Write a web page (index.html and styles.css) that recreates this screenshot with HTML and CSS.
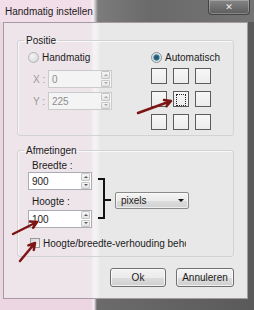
FILE: index.html
```html
<!DOCTYPE html>
<html lang="nl">
<head>
    <meta charset="UTF-8">
    <title>Handmatig instellen</title>
    <link rel="stylesheet" href="styles.css">
</head>
<body>
    <div class="window">
        <div class="titlebar">
            <span class="title">Handmatig instellen</span>
            <button class="close" aria-label="Sluiten">&#x2715;</button>
        </div>

        <div class="client">
            <fieldset class="group group-pos">
                <legend>Positie</legend>
                <div class="pos-cols">
                    <div class="pos-left">
                        <label class="radio disabled"><span class="dot"></span>Handmatig</label>
                        <div class="coord">
                            <span class="coord-label">X :</span>
                            <div class="spin disabled coord-spin">
                                <span class="spin-value">0</span>
                                <span class="spin-btns"><i class="up"></i><i class="down"></i></span>
                            </div>
                        </div>
                        <div class="coord coord-y">
                            <span class="coord-label">Y :</span>
                            <div class="spin disabled coord-spin">
                                <span class="spin-value">225</span>
                                <span class="spin-btns"><i class="up"></i><i class="down"></i></span>
                            </div>
                        </div>
                    </div>
                    <div class="pos-right">
                        <label class="radio checked"><span class="dot"></span>Automatisch</label>
                        <div class="anchor-grid">
                            <span class="cell"></span><span class="cell"></span><span class="cell"></span>
                            <span class="cell"></span><span class="cell selected"></span><span class="cell"></span>
                            <span class="cell"></span><span class="cell"></span><span class="cell"></span>
                        </div>
                    </div>
                </div>
            </fieldset>

            <fieldset class="group group-dims">
                <legend>Afmetingen</legend>
                <div class="dims-row">
                    <div class="dims-left">
                        <span class="field-label">Breedte :</span>
                        <div class="spin">
                            <span class="spin-value">900</span>
                            <span class="spin-btns"><i class="up"></i><i class="down"></i></span>
                        </div>
                        <span class="field-label field-label-h">Hoogte :</span>
                        <div class="spin spin-h">
                            <span class="spin-value">100</span>
                            <span class="spin-btns"><i class="up"></i><i class="down"></i></span>
                        </div>
                    </div>
                    <span class="bracket"></span>
                    <span class="tick"></span>
                    <div class="select">
                        <span>pixels</span>
                        <span class="caret"></span>
                    </div>
                </div>
                <label class="check">
                    <span class="box"></span>
                    <span class="check-text">Hoogte/breedte-verhouding behouden</span>
                </label>
            </fieldset>

            <div class="buttons">
                <button class="btn btn-ok">Ok</button>
                <button class="btn btn-cancel">Annuleren</button>
            </div>
        </div>

        <!-- rode pijlen van de uitleg -->
        <svg class="arrows" width="254" height="310" viewBox="0 0 254 310">
            <g fill="none" stroke="#7e1515" stroke-width="2.5" stroke-linecap="round" stroke-linejoin="round">
                <path d="M138 113 L171 101 M164 100 L171 101 L166.5 106.3"/>
                <path d="M13 234 L37 222 M30 221.6 L37 222 L33.1 227.8"/>
                <path d="M20 261 L35 243 M28.4 245.4 L35 243 L33.8 249.9"/>
            </g>
        </svg>
    </div>
</body>
</html>
```

FILE: styles.css
```css
* {
    box-sizing: border-box;
}

html, body {
    margin: 0;
    height: 100%;
}

body {
    font-family: "Liberation Sans", Arial, sans-serif;
    font-size: 10px;
    color: #1b1b1b;
    background-color: #5e5e5e;
}

.window {
    position: relative;
    width: 254px;
    height: 310px;
    display: flex;
    flex-direction: column;
    padding-bottom: 11px;
    background: linear-gradient(90deg, #ecd6e2 0, #ecd6e2 91px, #f6eff3 94px, #6b6b6b 97px, #5a5a5a 100%);
}

.titlebar {
    height: 22px;
    display: flex;
    align-items: flex-start;
    background: linear-gradient(90deg, #f2dee9 0, #f2dee9 90px, #f8f1f5 93px, #c8c8c8 95px, #7c7c7c 98px, #6a6a6a 150px, #747474 100%);
}

.title {
    margin: 5px 0 0 5px;
    line-height: 13px;
    font-size: 10px;
}

.close {
    margin-left: auto;
    margin-right: 4px;
    width: 42px;
    height: 15px;
    padding: 0;
    border: 1px solid #444;
    border-top: none;
    border-radius: 0 0 4px 4px;
    background: linear-gradient(#858585, #5c5c5c);
    box-shadow: inset 0 0 0 1px rgba(255, 255, 255, 0.25);
    color: #ececec;
    font-size: 9px;
    font-weight: bold;
    line-height: 14px;
    font-family: "DejaVu Sans", sans-serif;
}

.client {
    flex: 1;
    margin: 0 6px 0 3px;
    padding: 11px 13px 0 13px;
    border: 1px solid rgba(60, 40, 50, 0.4);
    background: linear-gradient(90deg, #eee5ea 0, #eee5ea 87px, #f6f2f4 90px, #f2f2f2 93px, #e8e8e8 96px, #e8e8e8 100%);
}

.group {
    margin: 0;
    padding: 4px 10px 5px 10px;
    border: 1px solid #d2d2d2;
    border-radius: 3px;
    box-shadow: inset 1px 1px 0 rgba(255, 255, 255, 0.7);
}

.group legend {
    margin-left: -4px;
    padding: 0 2px;
    line-height: 13px;
}

.group-dims {
    margin-top: 8px;
    padding-top: 3px;
    padding-bottom: 8px;
}

/* Positie */
.pos-cols {
    display: grid;
    grid-template-columns: 123px auto;
}

.radio {
    display: flex;
    align-items: center;
    gap: 3px;
    height: 13px;
}

.radio .dot {
    width: 11px;
    height: 11px;
    border-radius: 50%;
    border: 1px solid #8e8f8f;
    background: radial-gradient(circle at 40% 35%, #ffffff, #d9d9d9);
}

.radio.disabled .dot {
    border-color: #b5b5b5;
    background: radial-gradient(circle at 40% 35%, #f4f4f4, #d4d4d4);
}

.radio.checked .dot {
    background: radial-gradient(circle, #1f4a62 0, #2c6f8c 2.5px, #c5d8e2 3.5px, #f5f5f5 5px);
}

.coord {
    display: flex;
    align-items: center;
    margin-top: 6px;
}

.coord-y {
    margin-top: 4px;
}

.coord-label {
    width: 15px;
    margin-left: 5px;
    color: #9a9a9a;
}

.coord-spin {
    width: 50px;
}

.spin {
    display: flex;
    align-items: center;
    width: 64px;
    height: 18px;
    border: 1px solid #abadb3;
    background-color: #fff;
}

.spin.disabled {
    border-color: #cbcbcb;
    background-color: #f4f4f4;
    color: #8e8e8e;
}

.spin-value {
    flex: 1;
    padding-left: 3px;
}

.spin-btns {
    display: flex;
    flex-direction: column;
    gap: 1px;
    width: 9px;
    height: 16px;
    margin-right: 1px;
}

.spin-btns i {
    flex: 1;
    display: flex;
    align-items: center;
    justify-content: center;
    border: 1px solid #c6c6c6;
    border-radius: 1px;
    background: linear-gradient(#f6f6f6, #e2e2e2);
}

.spin-btns i::before {
    content: "";
    border-left: 2px solid transparent;
    border-right: 2px solid transparent;
}

.spin-btns .up::before {
    border-bottom: 2px solid #5a5a5a;
}

.spin-btns .down::before {
    border-top: 2px solid #5a5a5a;
}

.spin.disabled .spin-btns i::before {
    border-bottom-color: #a8a8a8;
    border-top-color: #a8a8a8;
}

.anchor-grid {
    display: grid;
    grid-template-columns: repeat(3, 16px);
    grid-auto-rows: 16px;
    column-gap: 6px;
    row-gap: 7px;
    margin-top: 4px;
}

.cell {
    border: 1px solid #5c5c5c;
    background: linear-gradient(#f7f7f7, #ececec);
}

.cell.selected {
    padding: 2px;
}

.cell.selected::before {
    content: "";
    display: block;
    height: 100%;
    border: 1px dotted #222;
}

/* Afmetingen */
.dims-row {
    display: flex;
    align-items: flex-start;
}

.dims-left {
    display: flex;
    flex-direction: column;
    width: 64px;
}

.field-label {
    margin-left: 4px;
    line-height: 12px;
}

.field-label-h {
    margin-top: 6px;
}

.spin-h {
    margin-top: 2px;
}

.bracket {
    width: 7px;
    height: 41px;
    margin: 18px 0 0 6px;
    border: 2px solid #111;
    border-left: none;
}

.tick {
    width: 6px;
    height: 2px;
    margin-top: 39px;
    background-color: #111;
}

.select {
    display: flex;
    align-items: center;
    justify-content: space-between;
    width: 74px;
    height: 17px;
    margin: 32px 0 0 4px;
    padding: 0 4px 0 5px;
    border: 1px solid #8a8a8a;
    border-radius: 2px;
    background: linear-gradient(#f4f4f4 0, #ebebeb 50%, #dcdcdc 51%, #d2d2d2 100%);
    box-shadow: inset 0 0 0 1px rgba(255, 255, 255, 0.6);
}

.caret {
    border-left: 3px solid transparent;
    border-right: 3px solid transparent;
    border-top: 3px solid #111;
}

.check {
    display: flex;
    align-items: center;
    height: 10px;
    margin-top: 10px;
}

.check .box {
    width: 10px;
    height: 10px;
    margin-left: 2px;
    border: 1px solid #9a9a9a;
    background: linear-gradient(135deg, #d8d8d8, #f2f2f2);
}

.check-text {
    width: 143px;
    margin-left: 3px;
    white-space: nowrap;
    overflow: hidden;
    line-height: 13px;
}

.buttons {
    display: flex;
    justify-content: flex-end;
    gap: 10px;
    margin-top: 11px;
}

.btn {
    height: 19px;
    padding: 0;
    border: 1px solid #707070;
    border-radius: 3px;
    background: linear-gradient(#f2f2f2 0, #ebebeb 50%, #dddddd 51%, #cfcfcf 100%);
    box-shadow: inset 0 0 0 1px rgba(255, 255, 255, 0.7);
    font-family: inherit;
    font-size: 10px;
    color: #1b1b1b;
}

.btn-ok {
    width: 56px;
}

.btn-cancel {
    width: 58px;
}

.arrows {
    position: absolute;
    top: 0;
    left: 0;
    pointer-events: none;
}
```
